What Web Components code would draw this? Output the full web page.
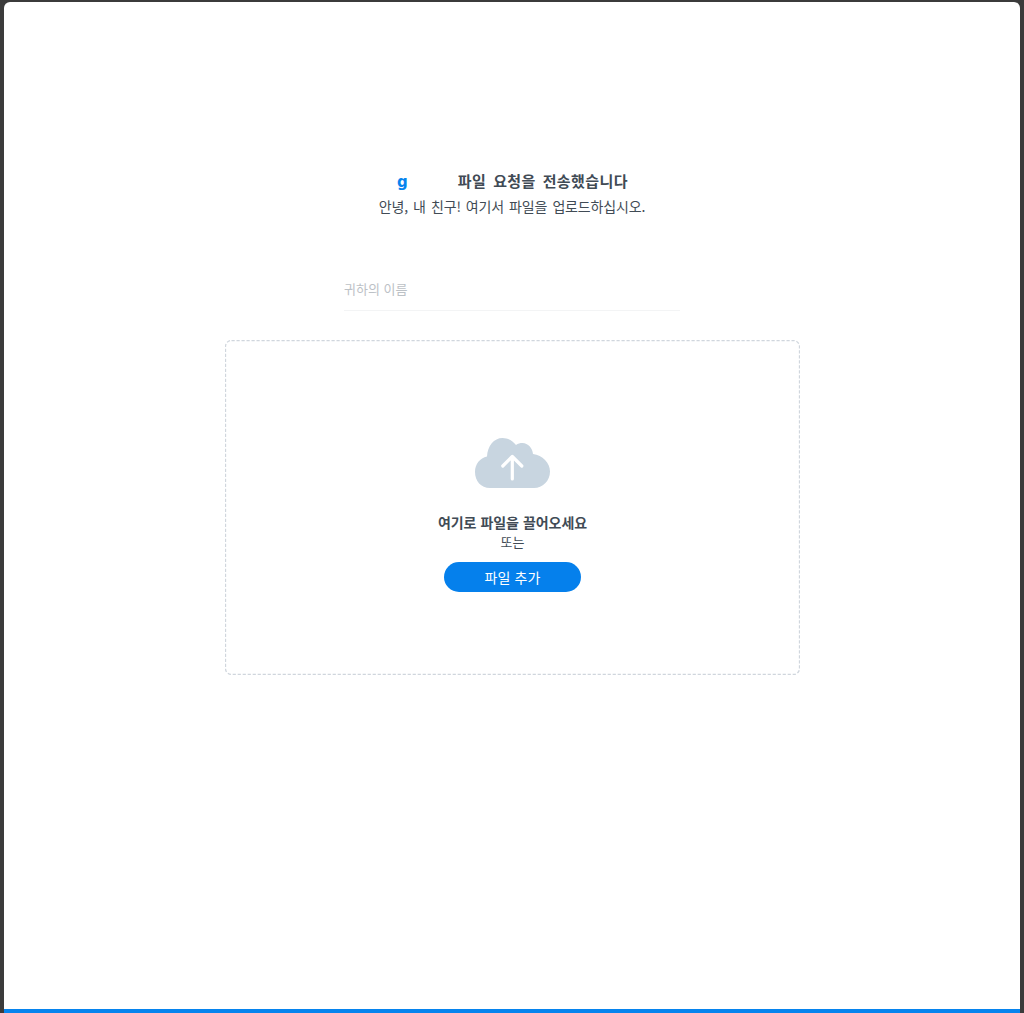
<!DOCTYPE html>
<html lang="ko">
<head>
<meta charset="utf-8">
<title>파일 요청</title>
<style>
    html, body { margin: 0; height: 100%; }
    body { background: #3b3b3b; font-family: "Noto Sans CJK KR", sans-serif; }
</style>
</head>
<body>
<request-window>
    <request-header name="g" title-text="파일 요청을 전송했습니다" message="안녕, 내 친구! 여기서 파일을 업로드하십시오."></request-header>
    <name-field placeholder="귀하의 이름"></name-field>
    <drop-zone>
        <upload-cloud slot="icon"></upload-cloud>
        <span slot="title">여기로 파일을 끌어오세요</span>
        <span slot="or">또는</span>
        <pill-button slot="action">파일 추가</pill-button>
    </drop-zone>
</request-window>

<script>
const FONT = '"Noto Sans CJK KR", sans-serif';

class RequestWindow extends HTMLElement {
    constructor() {
        super();
        this.attachShadow({ mode: 'open' });
        this.shadowRoot.innerHTML = `
            <style>
                :host {
                    display: flex;
                    flex-direction: column;
                    box-sizing: border-box;
                    height: 1013px;
                    padding: 2px 4px 0;
                    font-family: ${FONT};
                }
                .sheet {
                    flex: 1;
                    display: flex;
                    flex-direction: column;
                    align-items: center;
                    background: #fff;
                    border-radius: 6px 6px 0 0;
                    padding-top: 168px;
                    box-sizing: border-box;
                    border-bottom: 4px solid #0784ee;
                }
            </style>
            <div class="sheet"><slot></slot></div>
        `;
    }
}

class RequestHeader extends HTMLElement {
    constructor() {
        super();
        this.attachShadow({ mode: 'open' });
    }

    connectedCallback() {
        this.shadowRoot.innerHTML = `
            <style>
                :host { display: block; text-align: center; color: #414b55; font-size: 14px; }
                .title { display: flex; justify-content: center; align-items: baseline; margin-left: 1px; font-weight: 700; font-size: 15px; letter-spacing: 0.400px; word-spacing: 2.300px; line-height: 22px; height: 22px; }
                .name { color: #0784ee; font-family: "DejaVu Sans", sans-serif; font-weight: 700; font-size: 15px; letter-spacing: 0; margin-right: 50px; }
                .message { line-height: 20px; margin-top: 4px; letter-spacing: -0.160px; word-spacing: 1.350px; }
            </style>
            <div class="title"><span class="name">${this.getAttribute('name')}</span><span>${this.getAttribute('title-text')}</span></div>
            <div class="message">${this.getAttribute('message')}</div>
        `;
    }
}

class NameField extends HTMLElement {
    constructor() {
        super();
        this.attachShadow({ mode: 'open' });
    }

    connectedCallback() {
        this.shadowRoot.innerHTML = `
            <style>
                :host { display: block; width: 336px; margin-top: 55px; }
                input {
                    display: block;
                    box-sizing: border-box;
                    width: 100%;
                    height: 40px;
                    padding: 0 0 5px;
                    border: 0;
                    border-bottom: 1px solid #f3f4f5;
                    outline: 0;
                    font: 13px ${FONT};
                    color: #414b55;
                }
                input::placeholder { color: #bcc1c6; opacity: 1; }
            </style>
            <input type="text" placeholder="${this.getAttribute('placeholder')}">
        `;
    }
}

class DropZone extends HTMLElement {
    constructor() {
        super();
        this.attachShadow({ mode: 'open' });
        this.shadowRoot.innerHTML = `
            <style>
                :host {
                    position: relative;
                    display: flex;
                    flex-direction: column;
                    align-items: center;
                    box-sizing: border-box;
                    width: 575px;
                    height: 335px;
                    margin-top: 29px;
                    margin-left: 1px;
                    padding-top: 98px;
                    color: #414b55;
                    font-size: 13px;
                }
                .outline { position: absolute; inset: 0; width: 100%; height: 100%; pointer-events: none; }
                .title { font-weight: 700; font-size: 14px; letter-spacing: -0.100px; word-spacing: 0.350px; line-height: 20px; margin-top: 24px; }
                .or { line-height: 18px; margin-top: 1px; margin-bottom: 11px; }
            </style>
            <svg class="outline" viewBox="0 0 575 335">
                <rect x="0.500" y="0.500" width="574" height="334" rx="6" fill="none" stroke="#d0d6dd" stroke-width="1.300" stroke-dasharray="3.200 1.800"/>
            </svg>
            <slot name="icon"></slot>
            <div class="title"><slot name="title"></slot></div>
            <div class="or"><slot name="or"></slot></div>
            <slot name="action"></slot>
        `;
    }
}

class UploadCloud extends HTMLElement {
    constructor() {
        super();
        this.attachShadow({ mode: 'open' });
        this.shadowRoot.innerHTML = `
            <style>
                :host { display: block; width: 76px; height: 50px; }
                svg { display: block; }
            </style>
            <svg width="76" height="50" viewBox="0 0 76 50">
                <path fill="#c8d5e0" d="M15 50C6 50 0 43 0 34C0 26 5 20 12 18.500C12.500 8 19 0 27.500 0C33 0 38 3 41 7C43 5.500 45 5 47.500 5C53 5 57.500 10 58 16C67.500 17.500 75 24.500 75 33.500C75 43 67.500 50 59 50Z"/>
                <path fill="none" stroke="#fff" stroke-width="3.200" stroke-linecap="round" stroke-linejoin="round" d="M37.300 41V18.500M27.800 28L37.300 18.500L46.800 28"/>
            </svg>
        `;
    }
}

class PillButton extends HTMLElement {
    constructor() {
        super();
        this.attachShadow({ mode: 'open' });
        this.shadowRoot.innerHTML = `
            <style>
                :host {
                    display: flex;
                    align-items: center;
                    justify-content: center;
                    width: 137px;
                    height: 30px;
                    border-radius: 15px;
                    background: #0580ec;
                    color: #fff;
                    font-size: 14px;
                    letter-spacing: 0.100px;
                    cursor: pointer;
                }
            </style>
            <slot></slot>
        `;
    }
}

customElements.define('request-window', RequestWindow);
customElements.define('request-header', RequestHeader);
customElements.define('name-field', NameField);
customElements.define('drop-zone', DropZone);
customElements.define('upload-cloud', UploadCloud);
customElements.define('pill-button', PillButton);
</script>
</body>
</html>
